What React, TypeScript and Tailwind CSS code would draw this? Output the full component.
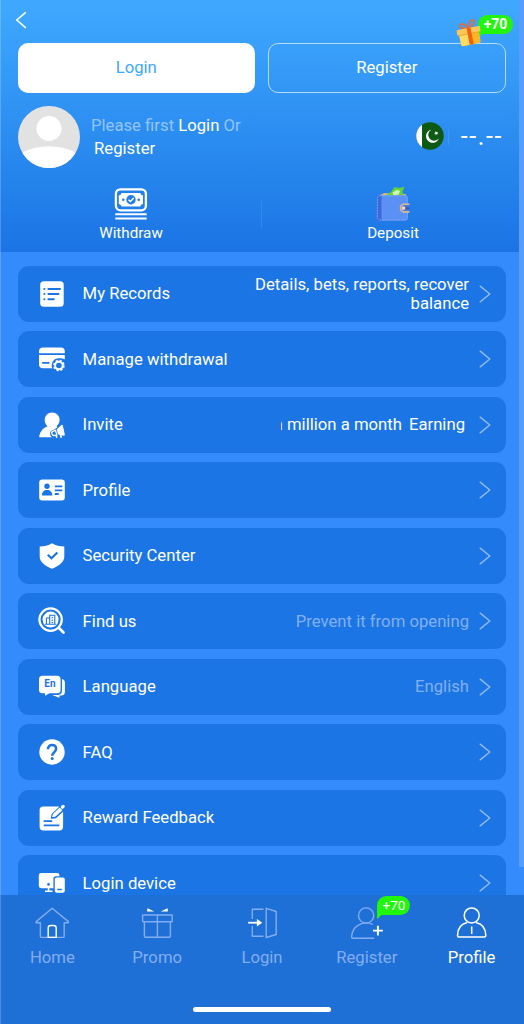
import React from "react";

interface IconProps {
  className?: string;
}

const BG = "#1b75e5";

const Chevron = () => (
  <svg className="w-3 h-[18px] shrink-0" viewBox="0 0 12 18" fill="none" stroke="#8fb9fa" strokeWidth="1.5">
    <path d="M1.2 1.2 10.8 9l-9.6 7.8" strokeLinecap="round" strokeLinejoin="round" />
  </svg>
);

const RecordsIcon = () => (
  <svg className="w-7 h-7" viewBox="0 0 28 28">
    <rect x="2.2" y="1.2" width="23.5" height="25.6" rx="3.6" fill="#fff" />
    <g stroke={BG} strokeWidth="2" strokeLinecap="round">
      <path d="M6.3 9h.1M6.3 14h.1M6.3 19.2h.1M10.4 9H22M10.4 14h10M10.4 19.2h5.4" />
    </g>
  </svg>
);

const WithdrawalIcon = () => (
  <svg className="w-7 h-7" viewBox="0 0 28 28">
    <path d="M1 8.3V6.4a4 4 0 0 1 4-4h17.8a4 4 0 0 1 4 4v1.9z" fill="#fff" />
    <path d="M1 10H26.8V23.3H5a4 4 0 0 1-4-4z" fill="#fff" />
    <path d="M4.8 17.8h6" stroke={BG} strokeWidth="1.8" strokeLinecap="round" />
    <path d="M20.9 13.2a7.3 7.3 0 0 0-6.6 10.3H28v-8.6c-1.6-1-4-1.7-7.1-1.7z" fill={BG} />
    <circle cx="20.9" cy="20.5" r="3.8" fill="none" stroke="#fff" strokeWidth="2" />
    <circle cx="20.9" cy="20.5" r="5" fill="none" stroke="#fff" strokeWidth="1.6" strokeDasharray="2.2 1.727" />
  </svg>
);

const InviteIcon = () => (
  <svg className="w-7 h-7" viewBox="0 0 28 28">
    <path
      d="M14.2 1.4a7.4 7.4 0 0 1 7.4 7.4c0 2.5-1.1 4.7-2.9 6.2l.7 1.2-3.4 2.6c-2.800.4-4.300 2.100-3.900 4.300.2 1.500.9 2.600 2.200 3.200H2c-.6 0-.8-.5-.7-1.100.8-4.700 4-8.300 8.300-9.900a8 8 0 0 1-2.900-6.500c0-4.200 3.300-7.400 7.500-7.400z"
      fill="#fff"
    />
    <path d="m18.600 18.400 4.800-4.500c.5-.4 1.100-.3 1.400.4l2 9.300c.1.800-.2 1.200-1 1.100l-5.700-1.200z" fill="#fff" />
    <path d="m17.400 19.300-2.100.8a2.200 2.200 0 0 0 1.400 4.200l2.200-.4z" fill={BG} stroke="#fff" strokeWidth="1.3" />
    <path d="m18 24.200.9 2.500M22.600 24l.7 2.700" fill="none" stroke="#fff" strokeWidth="1.6" />
  </svg>
);

const ProfileIcon = () => (
  <svg className="w-7 h-7" viewBox="0 0 28 28">
    <rect x="1.2" y="3.5" width="25.6" height="21" rx="3" fill="#fff" />
    <circle cx="9" cy="10.3" r="2.7" fill={BG} />
    <path d="M3.9 19.6c0-3.6 2-5.5 5.2-5.5s5.2 1.9 5.2 5.5z" fill={BG} />
    <path d="M16.8 10.4h7.5M16.8 14.3h7.5M16.8 18h4" stroke={BG} strokeWidth="1.8" />
  </svg>
);

const SecurityIcon = () => (
  <svg className="w-7 h-7" viewBox="0 0 28 28">
    <path
      d="M14 1.3c3.7 2.3 7.6 3.2 12.3 3.3v10.2c0 5.3-5.8 9.5-12.3 12-6.5-2.500-12.300-6.700-12.300-12V4.600C6.400 4.500 10.300 3.600 14 1.300z"
      fill="#fff"
    />
    <path d="m9.8 12.700 3.700 3.600 5.900-5.800" fill="none" stroke={BG} strokeWidth="2.2" />
  </svg>
);

const FindIcon = () => (
  <svg className="w-7 h-7" viewBox="0 0 28 28" fill="none" stroke="#fff">
    <circle cx="12.6" cy="12.6" r="11.2" strokeWidth="2.2" />
    <circle cx="12.6" cy="12.6" r="8" fill="#fff" stroke="none" />
    <path
      d="M8.4 17V11h3.300v6M11.700 17V8.200h5.100V17M7 17.200h11.200M13.500 10.800h1.700M13.500 13.200h1.700M13.500 15.500h1.700"
      stroke={BG}
      strokeWidth="1.1"
    />
    <path d="m20.700 20.700 4.800 4.800" strokeWidth="2.7" strokeLinecap="round" />
  </svg>
);

const LanguageIcon = () => (
  <svg className="w-7 h-7" viewBox="0 0 28 28">
    <path
      d="M4.5 2.800h14.600a3.500 3.500 0 0 1 3.500 3.500v10.500a3.500 3.500 0 0 1-3.500 3.500h-7.600l-4.500 2.500v-2.500H4.500A3.500 3.500 0 0 1 1 16.800V6.300a3.500 3.500 0 0 1 3.500-3.500z"
      fill="#fff"
    />
    <path d="M24 6c1.800.4 2.900 1.700 2.900 3.400v9.500c0 2-1.200 3.200-3.100 3.500h-2.400v2.300L14.200 22h5.300c2.600 0 4.500-1.700 4.500-4.500z" fill="#fff" />
    <text x="11.900" y="14.300" textAnchor="middle" fontSize="10" fontWeight="700" fontFamily="Roboto" fill={BG}>
      En
    </text>
  </svg>
);

const FaqIcon = () => (
  <svg className="w-7 h-7" viewBox="0 0 28 28">
    <circle cx="14" cy="14" r="12.7" fill="#fff" />
    <path d="M10 11.200c0-2.500 1.600-4.100 4-4.100s4.100 1.500 4.100 3.700c0 3.200-3.800 3.400-3.800 7" fill="none" stroke={BG} strokeWidth="2.5" />
    <circle cx="14.2" cy="20.6" r="1.5" fill={BG} />
  </svg>
);

const FeedbackIcon = () => (
  <svg className="w-7 h-7" viewBox="0 0 28 28">
    <rect x="1.6" y="2.4" width="23.5" height="24" rx="3.6" fill="#fff" />
    <path d="m20.500 1.500 4 1.500 2.500 4-1.700 1.300z" fill={BG} />
    <path d="m13.300 14.300.9-4.200 8.400-8.200 4 3.800-8.700 8.100z" fill={BG} stroke={BG} />
    <path d="m14.800 12.500.8-2.300 6-5.700 1.900 1.700-6.100 5.600z" fill="#fff" stroke="#fff" strokeWidth="1.2" strokeLinejoin="round" />
    <path d="m24.400 3.200.8-.8" stroke="#fff" strokeWidth="3.2" strokeLinecap="round" />
    <path d="M5.700 17.200h8.500M5.700 21.300h15.700" stroke={BG} strokeWidth="1.8" />
  </svg>
);

const DeviceIcon = () => (
  <svg className="w-7 h-7" viewBox="0 0 28 28">
    <path
      d="M3.200 4h15.900a2.400 2.400 0 0 1 2.400 2.400v.8h-3.400a2.700 2.700 0 0 0-2.700 2.700v9.300H3.200a2.400 2.400 0 0 1-2.400-2.400V6.400A2.400 2.400 0 0 1 3.200 4z"
      fill="#fff"
    />
    <path d="M7 22.200h7.600M10.600 17v5" stroke="#fff" strokeWidth="1.6" />
    <circle cx="10.5" cy="15.4" r="1.3" fill={BG} />
    <rect x="16.8" y="8.5" width="10" height="15.3" rx="2" fill="#fff" />
    <path d="M19.300 20.500h4.500" stroke={BG} strokeWidth="1.5" />
  </svg>
);

const GiftIcon = ({ className }: IconProps) => (
  <svg className={className} viewBox="0 0 26 28">
    <g transform="rotate(-11 13 14)">
      <path
        d="M13 9C7.500 9.300 4 7 5.500 4.600 7.500 2.300 11 4.500 13 9zM13.300 9c.7-4.800 4-8.400 6.400-6.600 2.200 2-1.500 5.800-6.400 6.600z"
        fill="none"
        stroke="#dd6d3b"
        strokeWidth="1.7"
      />
      <path d="M3 13h20v10.800a2 2 0 0 1-2 2H5a2 2 0 0 1-2-2z" fill="#ffb624" />
      <path d="M3 14h9v11.800H5a2 2 0 0 1-2-2z" fill="#ffdb62" />
      <rect x="1.2" y="8.8" width="23.6" height="6" rx="1.4" fill="#ffc657" />
      <path d="M2 14.800h22" stroke="#f09a2a" strokeWidth=".8" />
      <path d="M11.500 8.800h4v17h-4z" fill="#f2610f" />
    </g>
  </svg>
);

const WithdrawIcon = () => (
  <svg className="w-[34px] h-8" viewBox="0 0 34 32" fill="none" stroke="#fff">
    <rect x="1.9" y="1.3" width="30" height="21" rx="4.5" strokeWidth="2.3" />
    <path
      d="M7.500 4.900h18.800a3.300 3.300 0 0 0 2.700 2.700v8.400a3.300 3.300 0 0 0-2.700 2.600H7.500A3.300 3.300 0 0 0 4.800 16V7.600a3.300 3.300 0 0 0 2.700-2.700z"
      fill="#fff"
      stroke="none"
    />
    <circle cx="17" cy="11.7" r="4.7" fill="#207de8" stroke="none" />
    <path d="m14.500 11.700 1.900 1.800 3.300-3.400" strokeWidth="1.5" />
    <circle cx="9.3" cy="11.7" r="1.3" fill="#207de8" stroke="none" />
    <circle cx="24.7" cy="11.7" r="1.3" fill="#207de8" stroke="none" />
    <path d="M1.300 26.200h31.400M1.300 30.500h31.400" strokeWidth="2.1" />
  </svg>
);

const WalletIcon = () => (
  <svg className="w-[34px] h-9" viewBox="0 0 34 36">
    <path d="m3 9.500 5.500-2.600 21 1 1.500 3H3z" fill="#e0b58b" />
    <path d="m9 9.500 6-3.400 3.500-5 4.500.8 5.500-1.200-2.200 5.400 1.200 3-5.500 2z" fill="#64d33b" />
    <path d="m16.500 6.500 4-2.500 3.500.8-1.200 3.800-5.500.6z" fill="#d2f9b4" />
    <path d="M1 9.200h28a3 3 0 0 1 3 3v19a3.500 3.500 0 0 1-3.500 3.500H3A2.500 2.500 0 0 1 .7 32z" fill="#5b91f5" />
    <path d="M1 9.200h4.500v25.500H3A2.500 2.500 0 0 1 .7 32z" fill="#3c68dc" />
    <rect x="1.5" y="9.7" width="29.8" height="24.3" rx="2.5" fill="none" stroke="#83aafa" strokeWidth=".9" strokeDasharray="1.7 1" />
    <path d="M33.500 18.300h-6.200a4 4 0 0 0 0 7.600h6.200" fill="#4776d7" stroke="#d7b997" strokeWidth="1.6" />
    <circle cx="27.5" cy="22.1" r="1.9" fill="#f4d6af" />
    <path d="M29.500 22.100h4" stroke="#264fba" strokeWidth="1.3" />
  </svg>
);

const FlagIcon = ({ className }: IconProps) => (
  <svg className={className} viewBox="0 0 28 28">
    <circle cx="14" cy="14" r="13.7" fill="#0e5a12" />
    <path d="M6 2.800v22.400A13.700 13.700 0 0 1 6 2.800z" fill="#fff" />
    <path d="M15.300 7.700a6.600 6.600 0 1 0 7.600 8.600 5.900 5.900 0 1 1-7.600-8.600z" fill="#fff" />
    <path d="m19.500 9 1 1.200 1.500-.5-.7 1.400 1 1.200-1.600-.2-.9 1.300-.3-1.600-1.500-.4 1.400-.8z" fill="#fff" />
  </svg>
);

const HomeNavIcon = () => (
  <svg className="w-9 h-8" viewBox="0 0 36 32" fill="none" stroke="#82adf3" strokeWidth="1.4" strokeLinejoin="round">
    <path d="M18.200 1.200 2.200 14.600v1.200h4.200v13.700c0 .6.3.9.9.9h22c.6 0 .9-.3.9-.9V15.800h4.200v-1.200z" />
    <path d="M14.200 30.400V21a2.500 2.500 0 0 1 2.500-2.500h3a2.500 2.500 0 0 1 2.500 2.500v9.400z" stroke="#fff" />
  </svg>
);

const PromoNavIcon = () => (
  <svg className="w-9 h-8" viewBox="0 0 36 32" fill="none" stroke="#82adf3" strokeWidth="1.4">
    <rect x="3.6" y="8" width="29.6" height="6.8" rx=".6" />
    <path d="M5.400 14.800v14.400c0 .8.3 1.100 1 1.100h24c.7 0 1-.3 1-1.100V14.800M18.400 8v22.300" />
    <path d="M8.600 1.300c-.5 1-.6 2.200-.4 3.300h7zM28.400 1.300c.5 1 .6 2.200.4 3.300h-7z" fill="#fff" stroke="none" />
  </svg>
);

const LoginNavIcon = () => (
  <svg className="w-9 h-8" viewBox="0 0 36 32" fill="none" stroke="#82adf3" strokeWidth="1.4">
    <path d="M19.500 2.200H8.300v9.800M8.300 19v10.200h11.200M22.200 1.300l10 3.200v23l-10 3z" strokeLinejoin="round" />
    <path d="M4.200 15.700h9.500" stroke="#fff" strokeWidth="1.8" />
    <path d="m12.900 12 5.300 3.700-5.300 3.700z" fill="#fff" stroke="none" />
  </svg>
);

const RegisterNavIcon = () => (
  <svg className="w-9 h-8" viewBox="0 0 36 32" fill="none" stroke="#82adf3" strokeWidth="1.4">
    <circle cx="17.1" cy="8.5" r="7.6" />
    <path d="M23.800 17.400c-4.300-1.800-9.900-1.900-14 .4-4.700 2.600-7 7-7.200 12.200 0 .8.3 1.300 1 1.300h21.600" />
    <path d="M28.900 18.700v9.800M24 23.600h9.800" stroke="#fff" strokeWidth="1.9" />
  </svg>
);

const ProfileNavIcon = () => (
  <svg className="w-9 h-8" viewBox="0 0 36 32" fill="none" stroke="#fff" strokeWidth="1.5">
    <circle cx="17.7" cy="8.4" r="7.5" />
    <path d="M13.300 15.600C6.500 17.200 3.500 22.300 3.500 28.500c0 1.200.4 1.500 1.400 1.500h25.500c1 0 1.400-.3 1.400-1.500 0-6.200-3-11.300-9.800-12.900M17.700 19.500v7.500" />
  </svg>
);

const menu = [
  { label: "My Records", icon: RecordsIcon, note: "Details, bets, reports, recover balance", bright: true },
  { label: "Manage withdrawal", icon: WithdrawalIcon },
  { label: "Invite", icon: InviteIcon, marquee: true },
  { label: "Profile", icon: ProfileIcon },
  { label: "Security Center", icon: SecurityIcon },
  { label: "Find us", icon: FindIcon, note: "Prevent it from opening" },
  { label: "Language", icon: LanguageIcon, note: "English" },
  { label: "FAQ", icon: FaqIcon },
  { label: "Reward Feedback", icon: FeedbackIcon },
  { label: "Login device", icon: DeviceIcon },
];

const tabs = [
  { label: "Home", icon: HomeNavIcon },
  { label: "Promo", icon: PromoNavIcon },
  { label: "Login", icon: LoginNavIcon },
  { label: "Register", icon: RegisterNavIcon, badge: "+70" },
  { label: "Profile", icon: ProfileNavIcon, active: true },
];

const BadgeTail = () => (
  <svg className="absolute left-0 top-[17px] w-[7px] h-[6px]" viewBox="0 0 7 6">
    <path d="M0 0h7L0 6z" fill="#22f50c" />
  </svg>
);

const Header = () => (
  <header className="h-[252px] bg-linear-to-b from-[#40a9ff] to-[#1b74e4] px-[18px] flex flex-col">
    <div className="h-[43px] shrink-0 pt-[11px]">
      <svg className="w-3 h-[18px] -ml-[3px]" viewBox="0 0 12 18" fill="none" stroke="#fff" strokeWidth="1.6">
        <path d="M10.800 1.300 1.700 9l9.100 7.800" strokeLinejoin="round" />
      </svg>
    </div>
    <div className="flex gap-[13px]">
      <button className="flex-1 h-[49.5px] rounded-[10px] bg-white text-[#40a9ff]">Login</button>
      <button className="flex-1 h-[49.5px] rounded-[10px] border border-[#b5dbff] relative">
        Register
        <span className="absolute -right-[8px] -top-[29px] w-[35px] h-[19px] rounded-[10px] rounded-bl-none bg-[#22f50c] text-[14px] leading-[19px] font-bold">
          <BadgeTail />
          +70
        </span>
        <GiftIcon className="absolute w-[26px] h-7 right-[23px] -top-[25px]" />
      </button>
    </div>
    <div className="flex items-center mt-[13.5px]">
      <svg className="w-[62px] h-[62px] rounded-full" viewBox="0 0 62 62">
        <rect width="62" height="62" fill="#e2e2e2" />
        <circle cx="31" cy="22.500" r="12.500" fill="#fff" />
        <path d="M4.500 46.500C20 38.300 41 38.300 57.500 46.500V62h-53z" fill="#fff" />
      </svg>
      <p className="ml-[11px] leading-[23px] pb-[1px]">
        <span className="text-[#93c5fb]">Please first</span> Login <span className="text-[#93c5fb]">Or</span>
        <br />
        <span className="ml-[3px]">Register</span>
      </p>
      <div className="ml-auto flex items-center">
        <FlagIcon className="w-7 h-7 mb-[3px]" />
        <span className="w-px h-4 bg-[#4295f3] ml-1" />
        <span className="ml-[12px] mr-[3px] text-[25px] tracking-[1.6px] leading-7">--.--</span>
      </div>
    </div>
    <div className="flex items-center mt-[18px] -mx-[18px] text-[15.2px] leading-[18px] shrink-0">
      <div className="flex-1 flex flex-col items-center">
        <div className="h-9 flex items-end pb-[2px]">
          <WithdrawIcon />
        </div>
        <span className="mt-[2px]">Withdraw</span>
      </div>
      <span className="w-px h-[27px] bg-[#3488ed] -ml-px" />
      <div className="flex-1 flex flex-col items-center">
        <WalletIcon />
        <span className="mt-[2px]">Deposit</span>
      </div>
    </div>
  </header>
);

const App = () => {
  return (
    <div className="w-[524px] h-[1024px] flex flex-col overflow-hidden relative bg-[#348bfb] text-white text-[16.7px] font-['Roboto',sans-serif]">
      <div className="flex-1 min-h-0 overflow-hidden">
        <Header />
        <div className="px-[18px] pt-[13.6px] flex flex-col gap-[9.5px]">
          {menu.map(({ label, icon: Icon, note, bright, marquee }) => (
            <div key={label} className="h-14 shrink-0 rounded-[11px] bg-[#1b75e5] flex items-center pl-5 pr-[15px]">
              <Icon />
              <span className="ml-[16.6px] whitespace-nowrap">{label}</span>
              <div className="ml-auto mr-[10px] flex justify-end text-right leading-[19px]">
                {note && <span className={bright ? "w-[230px]" : "text-[#82b0f6]"}>{note}</span>}
                {marquee && (
                  <div className="flex mr-1 leading-[22px]">
                    <div className="w-[121px] overflow-hidden flex justify-end whitespace-nowrap">a million a month</div>
                    <span className="ml-[7px]">Earning</span>
                  </div>
                )}
              </div>
              <Chevron />
            </div>
          ))}
        </div>
      </div>
      <nav className="h-[129px] shrink-0 bg-[#1f70d6] flex flex-col">
        <div className="flex pt-3">
          {tabs.map(({ label, icon: Icon, badge, active }) => (
            <div key={label} className="flex-1 flex flex-col items-center relative">
              <Icon />
              <span className={active ? "mt-[6px]" : "mt-[6px] text-[#82adf3]"}>{label}</span>
              {badge && (
                <span className="absolute left-[63px] -top-[11px] w-[33px] h-[19px] rounded-[10px] rounded-bl-none bg-[#22f50c] text-[13.5px] leading-[19px] text-center">
                  {badge}
                  <BadgeTail />
                </span>
              )}
            </div>
          ))}
        </div>
        <div className="mt-auto mb-[12px] mx-auto w-[138px] h-[5px] rounded-full bg-white" />
      </nav>
      <div className="absolute right-0 top-0 w-[5px] h-[867px] bg-[#559dff]" />
      <div className="absolute left-0 top-0 w-px h-full bg-white/20" />
    </div>
  );
};

export default App;
